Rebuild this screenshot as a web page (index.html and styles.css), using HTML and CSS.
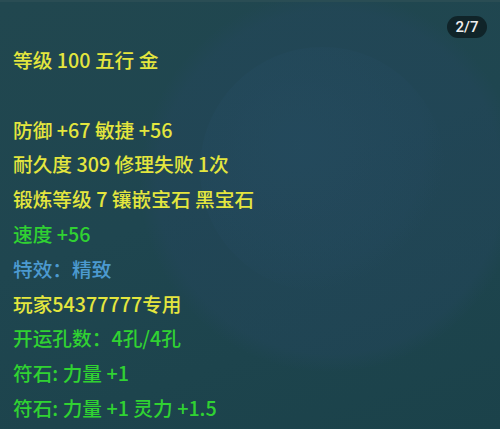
FILE: index.html
```html
<!DOCTYPE html>
<html lang="zh-CN">
<head>
<meta charset="utf-8">
<link rel="stylesheet" href="styles.css">
</head>
<body>
<div class="panel">
  <div class="glow glow-a"></div>
  <div class="glow glow-b"></div>
  <span class="badge">2/7</span>
  <div class="lines">
    <p class="y">等级 100 五行 金</p>
    <p class="blank">&nbsp;</p>
    <p class="y">防御 +67 敏捷 +56</p>
    <p class="y">耐久度 309 修理失败 1次</p>
    <p class="y">锻炼等级 7 镶嵌宝石 黑宝石</p>
    <p class="g">速度 +56</p>
    <p class="b">特效：精致</p>
    <p class="y">玩家54377777专用</p>
    <p class="g">开运孔数：4孔/4孔</p>
    <p class="g">符石: 力量 +1</p>
    <p class="g">符石: 力量 +1 灵力 +1.5</p>
  </div>
</div>
</body>
</html>
```
FILE: styles.css
```css
* { box-sizing: border-box; }
html, body { margin: 0; padding: 0; }
body { width: 500px; height: 429px; overflow: hidden; background: #1c4148; }
.panel {
  position: relative;
  width: 500px;
  height: 429px;
  overflow: hidden;
  background: linear-gradient(160deg, #21474f 0%, #1f4650 45%, #1b424a 100%);
  border-top: 2px solid #2a4d54;
  font-family: "Noto Sans CJK SC", "Noto Sans", sans-serif;
}
.glow { position: absolute; border-radius: 50%; pointer-events: none; }
.glow-a {
  left: 140px; top: -10px; width: 380px; height: 380px;
  background: radial-gradient(circle, rgba(36,70,92,0.5) 0%, rgba(36,70,92,0.45) 64%, rgba(36,70,92,0) 71%);
}
.glow-b {
  left: 200px; top: 45px; width: 245px; height: 245px;
  background: radial-gradient(circle at 40% 40%, rgba(40,80,104,0.35) 0%, rgba(38,76,100,0.2) 60%, rgba(38,76,100,0) 71%);
}
.badge {
  position: absolute;
  left: 447px; top: 14px;
  width: 40px; height: 22px;
  border-radius: 11px;
  background: #102429;
  color: #f0f0f0;
  font-family: Roboto, "Noto Sans", sans-serif;
  font-size: 15px;
  line-height: 22px;
  text-align: center;
  font-weight: 500;
}
.lines { position: relative; padding: 41px 0 0 13px; }
.lines p {
  margin: 0;
  font-size: 19.7px;
  font-weight: 500;
  line-height: 34.8px;
  height: 34.8px;
  white-space: nowrap;
}
.y { color: #e4e63e; }
.g { color: #30d232; }
.b { color: #4c9ad0; }
```
